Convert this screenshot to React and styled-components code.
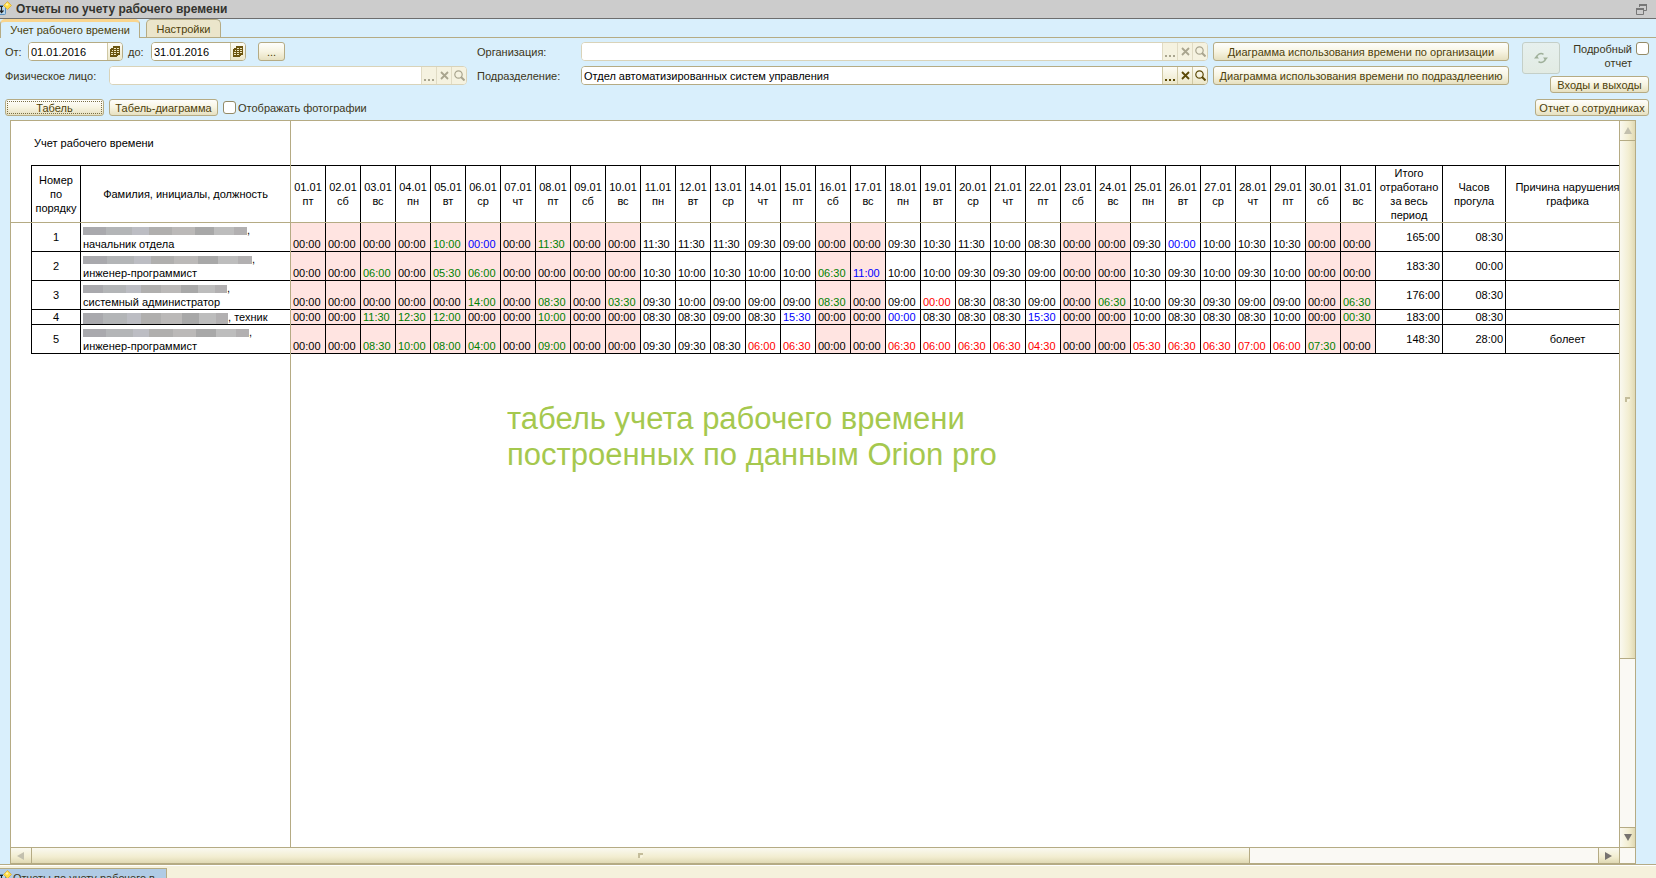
import React from "react";
import styled, { createGlobalStyle, css } from "styled-components";

const LINE = "#b5ab84";
const INK = "#4d3f0a";
const BUTTON_FACE = "linear-gradient(#fefefc, #f7f4e2 50%, #e6e0c0)";

const GlobalStyle = createGlobalStyle`
  *, *::before, *::after { box-sizing: border-box; }
  body { margin: 0; background: #d9effc; }
  body, button, input { font-family: "Liberation Sans", Arial, sans-serif; font-size: 11px; line-height: 14px; }
  button, input { margin: 0; padding: 0; }
`;

const Window = styled.div`
  display: flex;
  flex-direction: column;
  height: 100vh;
  overflow: hidden;
  color: #3c3620;
  background: #d9effc;
`;

const TitleBar = styled.header`
  display: flex;
  flex: none;
  align-items: center;
  height: 19px;
  padding-right: 9px;
  background: #ccc;
  border-bottom: 1px solid #6e6e6e;
`;

const Title = styled.h1`
  flex: 1;
  margin: 0 0 0 4px;
  font-size: 12px;
  line-height: 16px;
  font-weight: bold;
  color: #33332f;
`;

const RestoreButton = styled.button`
  display: flex;
  border: 0;
  background: none;
`;

const Tabs = styled.nav`
  display: flex;
  flex: none;
  align-items: flex-end;
  gap: 6px;
  height: 19px;
  border-bottom: 1px solid ${LINE};
`;

const Tab = styled.button`
  height: 18px;
  width: ${(p) => (p.$active ? 140 : 75)}px;
  color: ${INK};
  border: 1px solid ${LINE};
  border-bottom: 0;
  border-radius: 5px 5px 0 0;
  background: #ebe5cb;
  ${(p) =>
    p.$active &&
    css`
      height: 19px;
      margin-bottom: -1px;
      border-top: 3px solid #f9d58e;
      background: #d9effc;
    `}
`;

const Form = styled.div`
  display: grid;
  flex: none;
  grid-template-columns: 467px minmax(0, 1fr) 296px 46px 84px;
  column-gap: 5px;
  padding: 4px 7px 4px 5px;
`;

const Column = styled.div`
  display: flex;
  flex-direction: column;
  align-items: ${(p) => p.$align || "stretch"};
  gap: ${(p) => p.$gap || 5}px;
  min-width: 0;
`;

const PersonColumn = styled(Column)`
  padding-right: 5px;
`;

const Line = styled.div`
  display: flex;
  align-items: center;
  gap: ${(p) => p.$gap ?? 5}px;
  margin-top: ${(p) => p.$top || 0}px;
`;

const Label = styled.label`
  flex: none;
  width: ${(p) => p.$width || 23}px;
  padding-left: ${(p) => p.$indent || 0}px;
  white-space: nowrap;
`;

const Field = styled.div`
  display: flex;
  flex: ${(p) => (p.$width ? "none" : 1)};
  width: ${(p) => (p.$width ? `${p.$width}px` : "auto")};
  height: 19px;
  overflow: hidden;
  border: 1px solid ${(p) => (p.$muted ? "#d9d3b9" : LINE)};
  border-radius: 4px;
  background: #fff;
`;

const TextInput = styled.input`
  flex: 1;
  min-width: 0;
  padding-left: 2px;
  border: 0;
  outline: 0;
  background: #fff;
  color: #000;
`;

const FieldButton = styled.button`
  display: flex;
  align-items: center;
  justify-content: center;
  flex: none;
  width: 15px;
  border: 0;
  border-left: 1px solid ${(p) => (p.$muted ? "#e0dbc4" : "#cfc8a4")};
  background: ${(p) => (p.$muted ? "#f5f2e0" : "linear-gradient(#fdfcf5, #ece7c9)")};
  color: ${(p) => (p.$muted ? "#a9a58f" : "#5c4a08")};
`;

const Button = styled.button`
  flex: none;
  width: ${(p) => (p.$width ? `${p.$width}px` : "auto")};
  height: ${(p) => (p.$tall ? 19 : 17)}px;
  padding: 0;
  white-space: nowrap;
  color: ${INK};
  border: 1px solid ${LINE};
  border-radius: 3px;
  background: ${BUTTON_FACE};
  ${(p) =>
    p.$focused &&
    css`
      outline: 1px dotted #7a6f45;
      outline-offset: -3px;
    `}
`;

const PeriodButton = styled(Button)`
  margin-left: 12px;
`;

const RefreshButton = styled.button`
  display: flex;
  align-items: center;
  justify-content: center;
  justify-self: end;
  width: 38px;
  height: 32px;
  border: 1px solid #c4cfc8;
  border-radius: 3px;
  background: linear-gradient(#e6f0ee, #e2ebe3);
`;

const CheckLabel = styled.label`
  display: flex;
  align-items: ${(p) => (p.$detail ? "flex-start" : "center")};
  gap: ${(p) => (p.$detail ? 4 : 2)}px;
  line-height: 14px;
  text-align: right;
`;

const CheckBox = styled.input`
  appearance: none;
  flex: none;
  width: 13px;
  height: 13px;
  border: 1px solid #948a66;
  border-radius: 3px;
  background: #fff;
`;

const Frame = styled.main`
  display: grid;
  flex: 1;
  grid-template-columns: minmax(0, 1fr) 16px;
  grid-template-rows: minmax(0, 1fr) 16px;
  min-height: 0;
  margin: 0 20px 0 10px;
  border: 1px solid ${LINE};
  border-bottom-width: 2px;
`;

const Sheet = styled.section`
  position: relative;
  overflow: hidden;
  padding: 44px 0 0 20px;
  background: #fff;
  color: #000;
`;

const FreezeColumn = styled.div`
  position: absolute;
  top: 0;
  bottom: 0;
  left: 279px;
  width: 1px;
  background: ${LINE};
`;

const FreezeRow = styled.div`
  position: absolute;
  top: 101px;
  left: 0;
  right: 0;
  height: 1px;
  background: ${LINE};
`;

const Table = styled.table`
  width: 1599px;
  table-layout: fixed;
  border-collapse: separate;
  border-spacing: 0;
  border-top: 1px solid #000;
  border-left: 1px solid #000;
  caption-side: top;
`;

const Caption = styled.caption`
  position: absolute;
  top: 15px;
  left: 23px;
`;

const Head = styled.th`
  height: 57px;
  padding: 0 1px;
  font-weight: normal;
  border-right: 1px solid #000;
  border-bottom: 1px solid #000;
  vertical-align: middle;
  white-space: pre;
`;

const Cell = styled.td`
  height: ${(p) => (p.$short ? 15 : 29)}px;
  padding: 0 2px;
  line-height: 14px;
  text-align: ${(p) => p.$align || "center"};
  vertical-align: middle;
  border-right: 1px solid #000;
  border-bottom: 1px solid #000;
  white-space: nowrap;
`;

const TONES = { g: "#008000", b: "#0000ff", r: "#ff0000" };

const TimeCell = styled(Cell)`
  text-align: left;
  vertical-align: bottom;
  color: ${(p) => TONES[p.$tone] || "#000"};
  background: ${(p) => (p.$dayOff ? "#ffe4e1" : "#fff")};
`;

const Redacted = styled.span`
  display: inline-block;
  width: ${(p) => p.$width}px;
  height: ${(p) => (p.$tall ? 11 : 8)}px;
  vertical-align: middle;
  background: linear-gradient(
    90deg,
    #a9a9ad 0 14%, #b3b5b7 14% 30%, #bcbdc3 30% 40%, #b0afae 40% 54%,
    #bbb9b8 54% 68%, #a8a8a8 68% 80%, #bdbdbd 80% 92%, #b2b0b1 92%
  );
`;

const Note = styled.p`
  margin: 47px 0 0 476px;
  font-size: 31px;
  line-height: 36px;
  color: #a5c84e;
`;

const ScrollBar = styled.div`
  display: flex;
  min-width: 0;
  min-height: 0;
  flex-direction: ${(p) => (p.$vertical ? "column" : "row")};
  background: #faf9f4;
  border: 0 solid ${LINE};
  border-width: ${(p) => (p.$vertical ? "0 0 0 1px" : "1px 0 0 0")};
`;

const face = (p) =>
  `linear-gradient(${p.$vertical ? "90deg" : "180deg"}, #faf9f0, #f2edd0 60%, #e0d9b4)`;

const ScrollArrow = styled.button`
  display: flex;
  align-items: center;
  justify-content: center;
  flex: 0 0 ${(p) => (p.$vertical ? 20 : 21)}px;
  border: 0 solid ${LINE};
  border-width: ${(p) => p.$edge};
  background: ${face};
`;

const ScrollTrack = styled.div`
  display: flex;
  flex: 1;
  min-width: 0;
  min-height: 0;
  flex-direction: ${(p) => (p.$vertical ? "column" : "row")};
`;

const ScrollThumb = styled.div`
  display: flex;
  align-items: center;
  justify-content: center;
  flex: 0 0 ${(p) => p.$size}%;
  border: 0 solid ${LINE};
  border-width: ${(p) => (p.$vertical ? "0 0 1px 0" : "0 1px 0 0")};
  background: ${face};
`;

const Corner = styled.div`
  border: 0 solid ${LINE};
  border-width: 1px 0 0 1px;
  background: #faf9f4;
`;

const TaskBar = styled.footer`
  flex: 0 0 13px;
  overflow: hidden;
  padding-top: 2px;
  border-top: 1px solid #fff;
  background: #f5f1dc;
  box-shadow: 0 -1px 0 ${LINE};
`;

const TaskButton = styled.button`
  display: flex;
  align-items: center;
  gap: 1px;
  width: 167px;
  height: 20px;
  color: #3c3620;
  white-space: nowrap;
  border: 1px solid ${LINE};
  border-left: 0;
  background: #b0cbe5;
`;

const ReportIcon = () => (
  <svg width="12" height="16" viewBox="0 0 12 16" aria-hidden="true">
    <rect x="-5" y="4.500" width="10.500" height="9" rx="1" fill="#b9d6ec" stroke="#5b8fbd" />
    <path d="M0 5.500H3M1.500 5V11M0 9.500L1.500 11.500L3.500 9.500" fill="none" stroke="#222" strokeWidth="1.200" />
    <path d="M7.500 0.500L11.500 4.500L7.500 8.500L3.500 4.500Z" fill="#ffdc45" stroke="#d9ab3a" strokeWidth="0.800" />
    <path d="M7 2L8.500 3.500L7 5L5.500 3.500Z" fill="#fff4ae" />
  </svg>
);

const RestoreIcon = () => (
  <svg width="11" height="11" viewBox="0 0 11 11" fill="none" stroke="#777" aria-hidden="true">
    <path d="M3.500 3V0.500H10.500V6.500H8" />
    <path d="M3 1H11" strokeWidth="2" />
    <path d="M0.500 4V10.500H7.500V4" />
    <path d="M0 5H8" strokeWidth="2" />
  </svg>
);

const CalendarIcon = () => (
  <svg width="10" height="11" viewBox="0 0 10 11" shapeRendering="crispEdges" aria-hidden="true">
    <path d="M3 0H10V9H8V10H7V11H0V3H1V2H3Z" fill="#6b5510" />
    <path d="M4 2H6V3H4ZM7 2H9V3H7ZM2 4H3V5H2ZM4 4H6V5H4ZM7 4H9V5H7ZM1 6H3V7H1ZM4 6H6V7H4ZM7 6H9V7H7ZM1 8H3V9H1ZM4 8H6V9H4Z" fill="#f0e9c4" />
  </svg>
);

const DotsIcon = () => (
  <svg width="11" height="11" viewBox="0 0 11 11" fill="currentColor" aria-hidden="true">
    <path d="M0 9H2V11H0ZM4 9H6V11H4ZM8 9H10V11H8Z" />
  </svg>
);

const CrossIcon = () => (
  <svg width="9" height="9" viewBox="0 0 9 9" fill="none" stroke="currentColor" strokeWidth="1.800" aria-hidden="true">
    <path d="M1 1L8 8M8 1L1 8" />
  </svg>
);

const SearchIcon = () => (
  <svg width="11" height="11" viewBox="0 0 11 11" fill="none" stroke="currentColor" aria-hidden="true">
    <circle cx="4.500" cy="4.500" r="3.700" strokeWidth="1.200" />
    <path d="M7 7L10.500 10.500" strokeWidth="2" />
  </svg>
);

const RefreshIcon = () => (
  <svg width="14" height="12" viewBox="0 0 14 12" aria-hidden="true">
    <path d="M2.500 6A4.500 4.500 0 0 1 9.500 2.300M11.500 6A4.500 4.500 0 0 1 4.500 9.700" fill="none" stroke="#9fb09a" strokeWidth="1.500" />
    <path d="M0 6.500H5L2.500 3.500ZM9 5.500H14L11.500 8.500Z" fill="#9fb09a" />
  </svg>
);

const TRIANGLES = {
  up: "M4 0L8 7H0Z",
  down: "M0 0H8L4 7Z",
  left: "M7 0V8L0 4Z",
  right: "M0 0L7 4L0 8Z",
};

const Arrow = ({ dir, muted }) => (
  <svg width="8" height="8" viewBox="0 0 8 8" aria-hidden="true">
    <path d={TRIANGLES[dir]} fill={muted ? "#c3c0ae" : "#77736f"} />
  </svg>
);

const Grip = () => (
  <svg width="5" height="5" viewBox="0 0 5 5" fill="none" aria-hidden="true">
    <path d="M1 5V1H5" stroke="#c4bd9b" strokeWidth="2" />
    <path d="M2 4H4V2" stroke="#fbf8e6" />
  </svg>
);

const WEEK = ["пт", "сб", "вс", "пн", "вт", "ср", "чт"];
const DAYS = Array.from({ length: 31 }, (_, i) => ({
  date: `${String(i + 1).padStart(2, "0")}.01`,
  weekday: WEEK[i % 7],
  off: i < 10 || [15, 16, 22, 23, 29, 30].includes(i),
}));

// A trailing letter gives the tone of an entry: g(reen), b(lue), r(ed).
const PEOPLE = [
  {
    hidden: 164, post: "начальник отдела", total: "165:00", missed: "08:30", reason: "",
    times: "00:00 00:00 00:00 00:00 10:00g 00:00b 00:00 11:30g 00:00 00:00 11:30 11:30 11:30 09:30 09:00 00:00 00:00 09:30 10:30 11:30 10:00 08:30 00:00 00:00 09:30 00:00b 10:00 10:30 10:30 00:00 00:00",
  },
  {
    hidden: 169, post: "инженер-программист", total: "183:30", missed: "00:00", reason: "",
    times: "00:00 00:00 06:00g 00:00 05:30g 06:00g 00:00 00:00 00:00 00:00 10:30 10:00 10:30 10:00 10:00 06:30g 11:00b 10:00 10:00 09:30 09:30 09:00 00:00 00:00 10:30 09:30 10:00 09:30 10:00 00:00 00:00",
  },
  {
    hidden: 144, post: "системный администратор", total: "176:00", missed: "08:30", reason: "",
    times: "00:00 00:00 00:00 00:00 00:00 14:00g 00:00 08:30g 00:00 03:30g 09:30 10:00 09:00 09:00 09:00 08:30g 00:00 09:00 00:00r 08:30 08:30 09:00 00:00 06:30g 10:00 09:30 09:30 09:00 09:00 00:00 06:30g",
  },
  {
    hidden: 145, post: "техник", short: true, total: "183:00", missed: "08:30", reason: "",
    times: "00:00 00:00 11:30g 12:30g 12:00g 00:00 00:00 10:00g 00:00 00:00 08:30 08:30 09:00 08:30 15:30b 00:00 00:00 00:00b 08:30 08:30 08:30 15:30b 00:00 00:00 10:00 08:30 08:30 08:30 10:00 00:00 00:30g",
  },
  {
    hidden: 166, post: "инженер-программист", total: "148:30", missed: "28:00", reason: "болеет",
    times: "00:00 00:00 08:30g 10:00g 08:00g 04:00g 00:00 09:00g 00:00 00:00 09:30 09:30 08:30 06:00r 06:30r 00:00 00:00 06:30r 06:00r 06:30r 06:30r 04:30r 00:00 00:00 05:30r 06:30r 06:30r 07:00r 06:00r 07:30g 00:00",
  },
];

function DateField({ id, value }) {
  return (
    <Field $width={95}>
      <TextInput id={id} defaultValue={value} />
      <FieldButton aria-label="Выбрать дату"><CalendarIcon /></FieldButton>
    </Field>
  );
}

function LookupField({ id, value = "", muted }) {
  return (
    <Field $muted={muted}>
      <TextInput id={id} defaultValue={value} />
      <FieldButton $muted={muted} aria-label="Выбрать"><DotsIcon /></FieldButton>
      <FieldButton $muted={muted} aria-label="Очистить"><CrossIcon /></FieldButton>
      <FieldButton $muted={muted} aria-label="Найти"><SearchIcon /></FieldButton>
    </Field>
  );
}

function PersonRow({ person, number }) {
  return (
    <tr>
      <Cell $short={person.short}>{number}</Cell>
      <Cell $short={person.short} $align="left">
        <Redacted $width={person.hidden} $tall={person.short} />
        {person.short ? ", " : <>,<br /></>}
        {person.post}
      </Cell>
      {person.times.split(" ").map((entry, i) => (
        <TimeCell key={i} $short={person.short} $tone={entry[5]} $dayOff={DAYS[i].off}>
          {entry.slice(0, 5)}
        </TimeCell>
      ))}
      <Cell $short={person.short} $align="right">{person.total}</Cell>
      <Cell $short={person.short} $align="right">{person.missed}</Cell>
      <Cell $short={person.short}>{person.reason}</Cell>
    </tr>
  );
}

export default function App() {
  return (
    <Window>
      <GlobalStyle />
      <TitleBar>
        <ReportIcon />
        <Title>Отчеты по учету рабочего времени</Title>
        <RestoreButton aria-label="Восстановить"><RestoreIcon /></RestoreButton>
      </TitleBar>
      <Tabs>
        <Tab $active>Учет рабочего времени</Tab>
        <Tab>Настройки</Tab>
      </Tabs>

      <Form>
        <PersonColumn>
          <Line $gap={0}>
            <Label htmlFor="from">От:</Label>
            <DateField id="from" value="01.01.2016" />
            <Label htmlFor="to" $width={28} $indent={5}>до:</Label>
            <DateField id="to" value="31.01.2016" />
            <PeriodButton $tall $width={27}>...</PeriodButton>
          </Line>
          <Line>
            <Label htmlFor="person" $width={99}>Физическое лицо:</Label>
            <LookupField id="person" muted />
          </Line>
          <Line $top={9}>
            <Button $width={99} $focused>Табель</Button>
            <Button $width={109}>Табель-диаграмма</Button>
            <CheckLabel><CheckBox type="checkbox" />Отображать фотографии</CheckLabel>
          </Line>
        </PersonColumn>
        <Column>
          <Line>
            <Label htmlFor="org" $width={99}>Организация:</Label>
            <LookupField id="org" muted />
          </Line>
          <Line>
            <Label htmlFor="dept" $width={99}>Подразделение:</Label>
            <LookupField id="dept" value="Отдел автоматизированных систем управления" />
          </Line>
        </Column>
        <Column>
          <Button $tall>Диаграмма использования времени по организации</Button>
          <Button $tall>Диаграмма использования времени по подраздлеению</Button>
        </Column>
        <RefreshButton aria-label="Обновить"><RefreshIcon /></RefreshButton>
        <Column $align="flex-end" $gap={6}>
          <CheckLabel $detail>
            <span>Подробный<br />отчет</span>
            <CheckBox type="checkbox" />
          </CheckLabel>
          <Button $width={99}>Входы и выходы</Button>
          <Button $width={114}>Отчет о сотрудниках</Button>
        </Column>
      </Form>

      <Frame>
        <Sheet>
          <Table>
            <Caption>Учет рабочего времени</Caption>
            <colgroup>
              <col width="49" />
              <col width="210" />
              {DAYS.map((d) => <col key={d.date} width="35" />)}
              <col width="67" />
              <col width="63" />
              <col width="124" />
            </colgroup>
            <thead>
              <tr>
                <Head>{"Номер\nпо\nпорядку"}</Head>
                <Head>Фамилия, инициалы, должность</Head>
                {DAYS.map((d) => <Head key={d.date}>{`${d.date}\n${d.weekday}`}</Head>)}
                <Head>{"Итого\nотработано\nза весь\nпериод"}</Head>
                <Head>{"Часов\nпрогула"}</Head>
                <Head>{"Причина нарушения\nграфика"}</Head>
              </tr>
            </thead>
            <tbody>
              {PEOPLE.map((person, i) => <PersonRow key={i} person={person} number={i + 1} />)}
            </tbody>
          </Table>
          <FreezeColumn />
          <FreezeRow />
          <Note>табель учета рабочего времени<br />построенных по данным Orion pro</Note>
        </Sheet>
        <ScrollBar $vertical>
          <ScrollArrow $vertical $edge="0 0 1px 0" aria-label="Вверх"><Arrow dir="up" muted /></ScrollArrow>
          <ScrollTrack $vertical><ScrollThumb $vertical $size={75.5}><Grip /></ScrollThumb></ScrollTrack>
          <ScrollArrow $vertical $edge="1px 0 0 0" aria-label="Вниз"><Arrow dir="down" /></ScrollArrow>
        </ScrollBar>
        <ScrollBar>
          <ScrollArrow $edge="0 1px 0 0" aria-label="Влево"><Arrow dir="left" muted /></ScrollArrow>
          <ScrollTrack><ScrollThumb $size={77.8}><Grip /></ScrollThumb></ScrollTrack>
          <ScrollArrow $edge="0 0 0 1px" aria-label="Вправо"><Arrow dir="right" /></ScrollArrow>
        </ScrollBar>
        <Corner />
      </Frame>

      <TaskBar>
        <TaskButton><ReportIcon />Отчеты по учету рабочего в...</TaskButton>
      </TaskBar>
    </Window>
  );
}
